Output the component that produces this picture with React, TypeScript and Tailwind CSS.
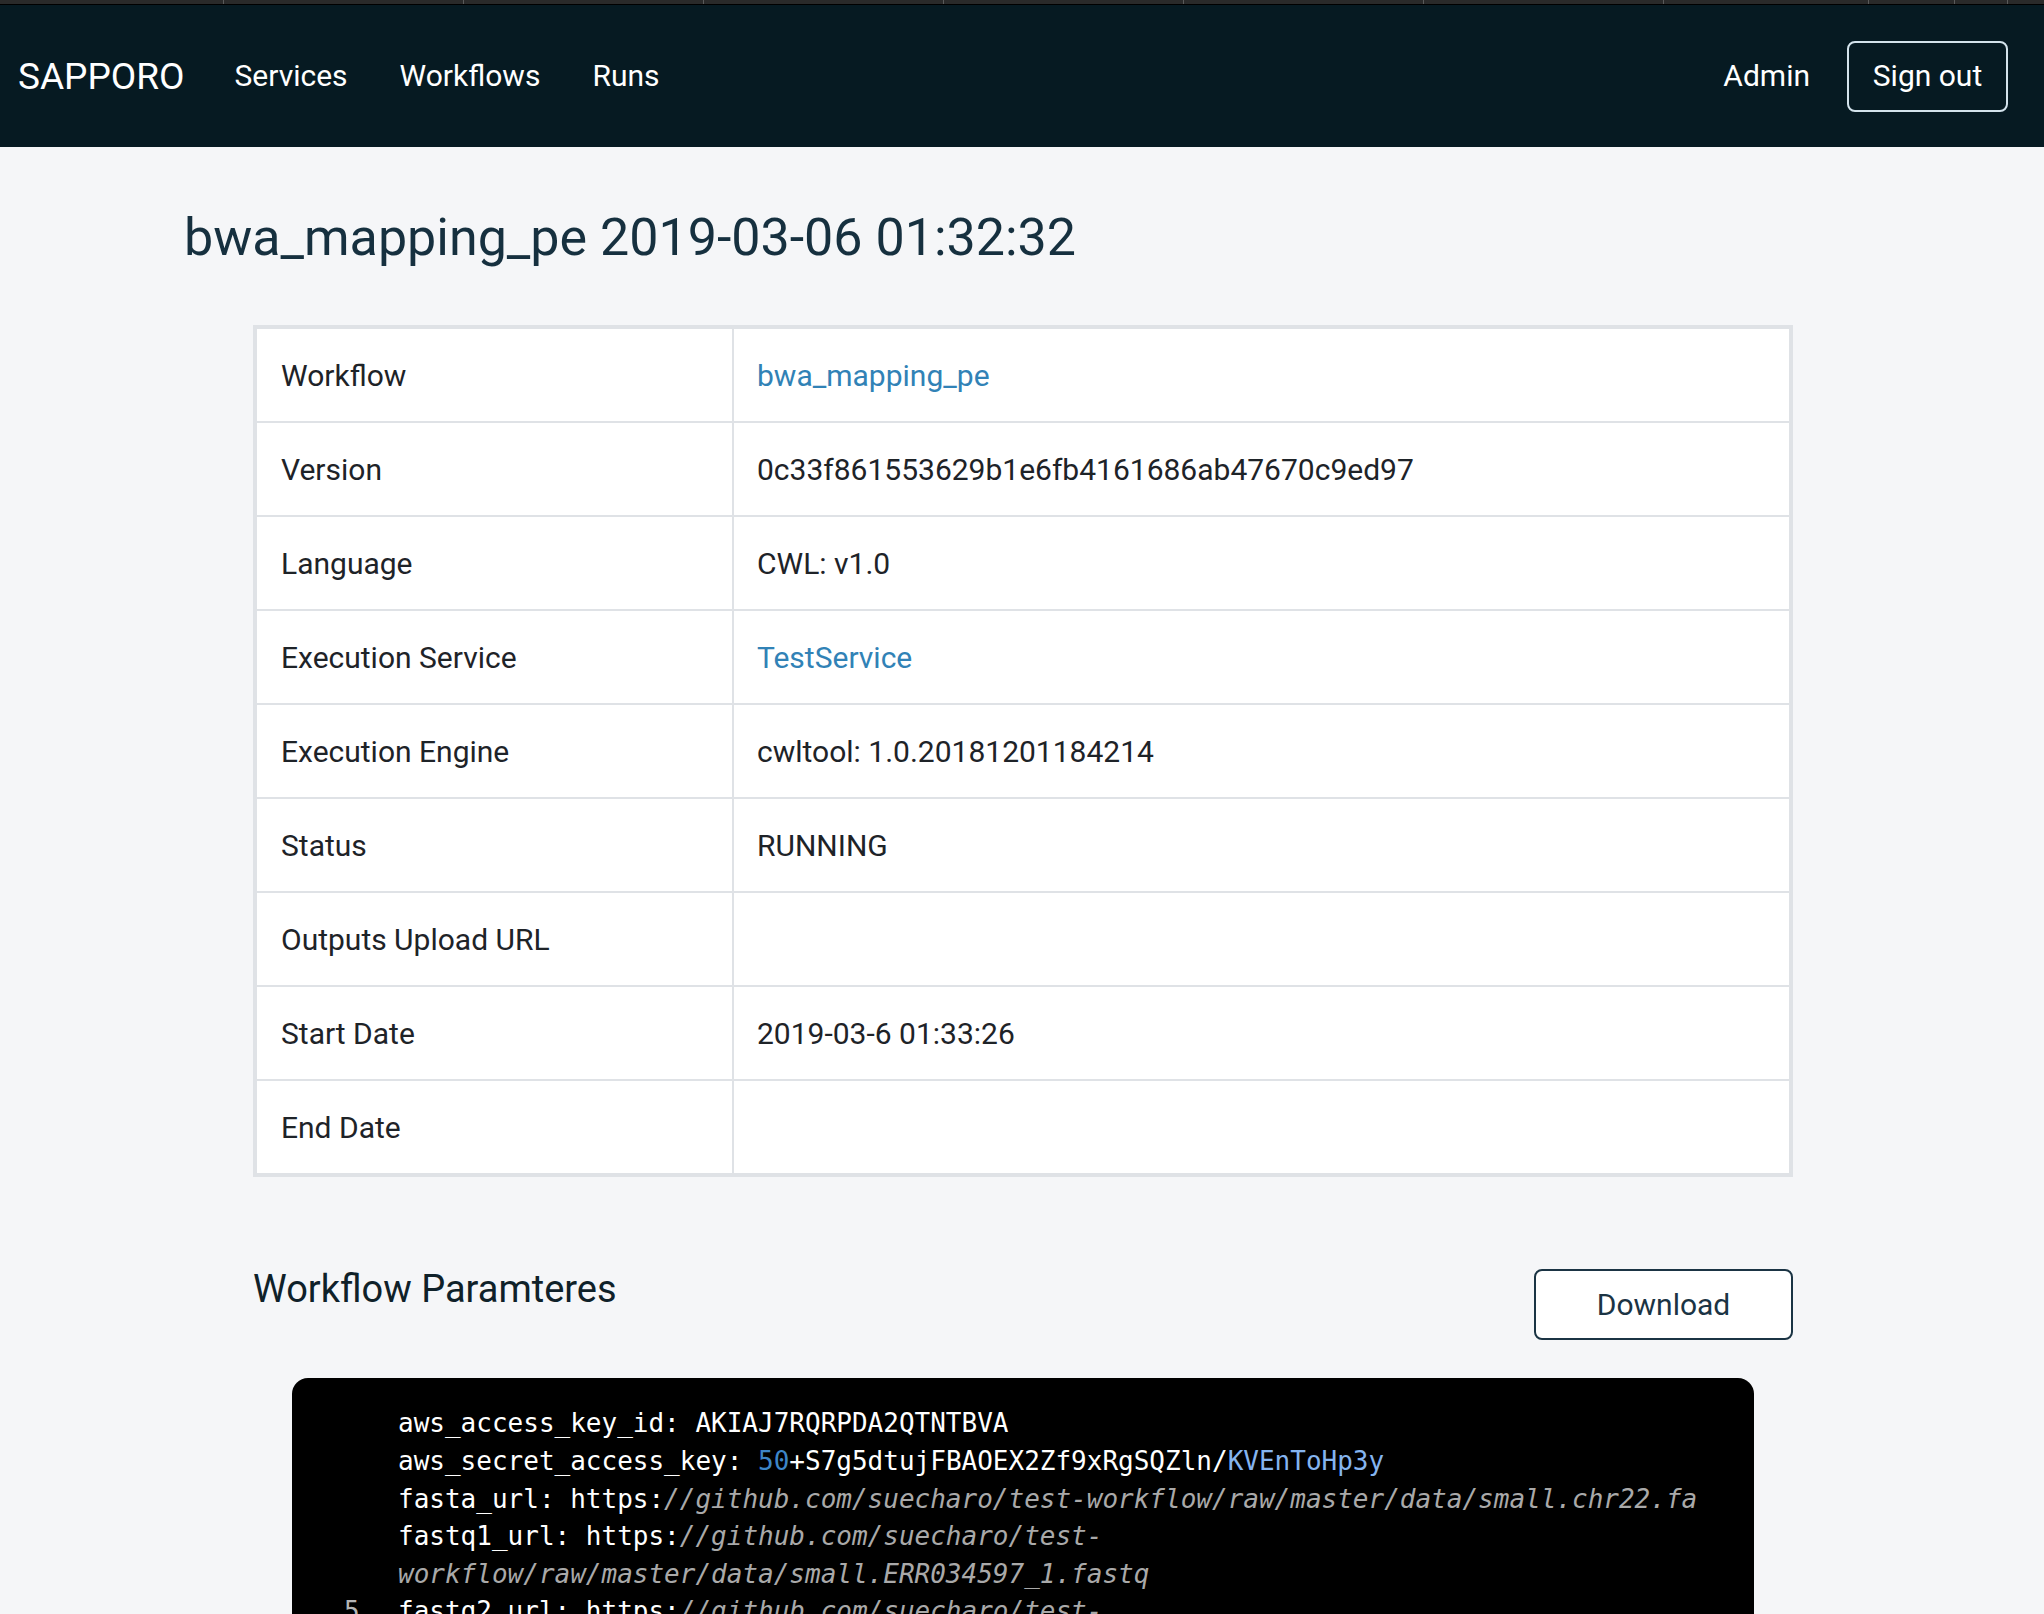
const rows = [
  { label: "Workflow", value: "bwa_mapping_pe", link: true },
  { label: "Version", value: "0c33f861553629b1e6fb4161686ab47670c9ed97" },
  { label: "Language", value: "CWL: v1.0" },
  { label: "Execution Service", value: "TestService", link: true },
  { label: "Execution Engine", value: "cwltool: 1.0.20181201184214" },
  { label: "Status", value: "RUNNING" },
  { label: "Outputs Upload URL", value: "" },
  { label: "Start Date", value: "2019-03-6 01:33:26" },
  { label: "End Date", value: "" },
];

function Comment({ children }: { children: React.ReactNode }) {
  return <span className="italic text-[#a9a9a9]">{children}</span>;
}

function CodeLine({ num, children }: { num?: number; children: React.ReactNode }) {
  return (
    <div className="flex">
      <span className="w-[54px] shrink-0 text-[#b5b5b5]">{num ?? ""}</span>
      <span className="whitespace-pre">{children}</span>
    </div>
  );
}

export default function App() {
  return (
    <div className="min-h-screen bg-[#f5f6f8] font-['Roboto',sans-serif]">
      {/* browser tab strip */}
      <div className="flex h-[5px] border-b border-black bg-[#2a2a2a]">
        <div className="w-[224px] border-r border-[#5a5a5a]" />
        <div className="w-[240px] border-r border-[#5a5a5a]" />
        <div className="w-[240px] border-r border-[#5a5a5a]" />
        <div className="w-[240px] border-r border-[#5a5a5a]" />
        <div className="w-[240px] border-r border-[#5a5a5a]" />
        <div className="w-[240px] border-r border-[#5a5a5a]" />
        <div className="w-[240px] border-r border-[#5a5a5a]" />
        <div className="w-[205px] border-r border-[#5a5a5a]" />
        <div className="w-[86px] border-r border-[#5a5a5a]" />
        <div className="w-[53px] border-r border-[#5a5a5a]" />
      </div>

      {/* Navbar */}
      <nav className="flex h-[142px] items-center bg-[#061a22] pl-[18px] pr-[36px] text-white">
        <a className="text-[37px] leading-none">SAPPORO</a>
        <div className="ml-[50px] flex gap-[52px] text-[30px] leading-none">
          <a>Services</a>
          <a>Workflows</a>
          <a>Runs</a>
        </div>
        <div className="ml-auto flex items-center gap-[37px]">
          <a className="text-[30px] leading-none">Admin</a>
          <button className="h-[71px] w-[161px] rounded-[8px] border-2 border-[#d3e3ec] text-[30px] leading-none text-white">
            Sign out
          </button>
        </div>
      </nav>

      <h1 className="pl-[184px] pt-[60px] text-[52px] leading-[1.2] text-[#16303f]">
        bwa_mapping_pe 2019-03-06 01:32:32
      </h1>

      <div className="ml-[253px] w-[1540px]">
        {/* Run details */}
        <div className="mt-[56px] border-4 border-[#dfe2e6] bg-white text-[30px] text-[#1e2328]">
          {rows.map((row, i) => (
            <div
              key={row.label}
              className={`grid h-[92px] grid-cols-[477px_1fr] ${i < rows.length - 1 ? "box-content border-b-2 border-[#dfe2e6]" : ""}`}
            >
              <div className="flex items-center border-r-2 border-[#dfe2e6] pl-[24px]">{row.label}</div>
              <div className="flex items-center pl-[23px]">
                {row.link ? <a className="text-[#3182b6]">{row.value}</a> : row.value}
              </div>
            </div>
          ))}
        </div>

        {/* Parameters */}
        <div className="mt-[90px] flex items-start justify-between">
          <h2 className="text-[38px] leading-[1.2] text-[#0f2129]">Workflow Paramteres</h2>
          <button className="mt-[2px] h-[71px] w-[259px] rounded-[8px] border-2 border-[#1b3444] bg-white text-[30px] text-[#1b3444]">
            Download
          </button>
        </div>

        <div className="mx-[39px] mt-[38px] rounded-[16px] bg-black pb-[40px] pl-[52px] pt-[27px] font-['DejaVu_Sans_Mono',monospace] text-[26px] leading-[37.6px] text-white">
          <CodeLine>aws_access_key_id: AKIAJ7RQRPDA2QTNTBVA</CodeLine>
          <CodeLine>
            aws_secret_access_key: <span className="text-[#3d86c8]">50</span>+S7g5dtujFBAOEX2Zf9xRgSQZln/
            <span className="text-[#85b4ef]">KVEnToHp3y</span>
          </CodeLine>
          <CodeLine>
            fasta_url: https:<Comment>//github.com/suecharo/test-workflow/raw/master/data/small.chr22.fa</Comment>
          </CodeLine>
          <CodeLine>
            fastq1_url: https:<Comment>//github.com/suecharo/test-</Comment>
          </CodeLine>
          <CodeLine>
            <Comment>workflow/raw/master/data/small.ERR034597_1.fastq</Comment>
          </CodeLine>
          <CodeLine num={5}>
            fastq2_url: https:<Comment>//github.com/suecharo/test-</Comment>
          </CodeLine>
          <CodeLine>
            <Comment>workflow/raw/master/data/small.ERR034597_2.fastq</Comment>
          </CodeLine>
          <CodeLine>nthreads: 2</CodeLine>
        </div>
      </div>
    </div>
  );
}
